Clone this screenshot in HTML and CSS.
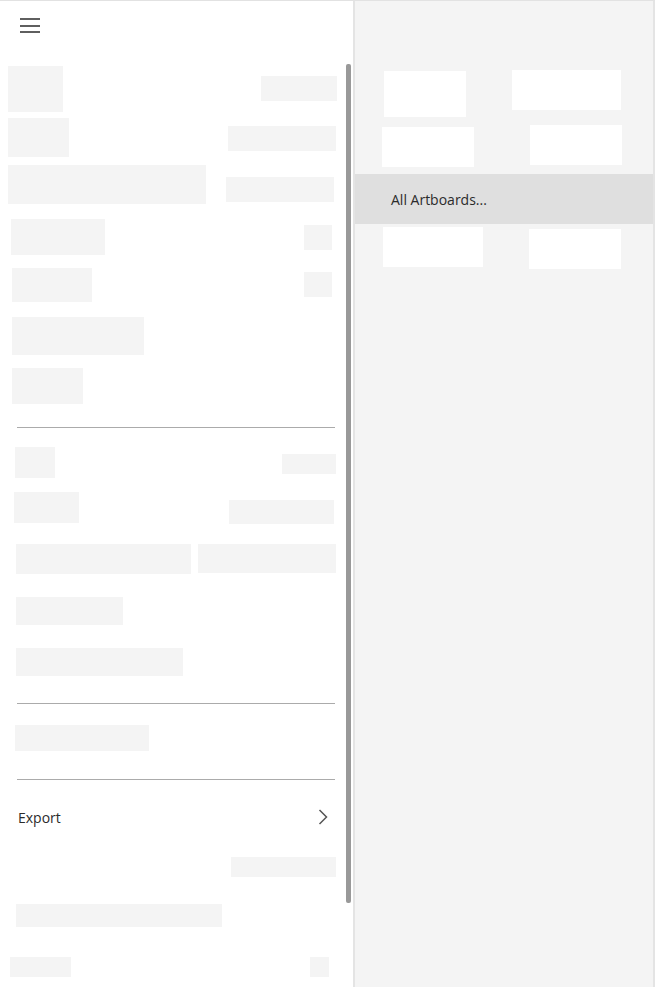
FILE: index.html
```html
<!DOCTYPE html>
<html lang="en">
<head>
  <meta charset="UTF-8">
  <meta name="viewport" content="width=device-width, initial-scale=1.0">
  <title>Menu</title>
  <link rel="stylesheet" href="styles.css">
</head>
<body>
  <div class="app">
    <div class="menu">
      <div class="menu-header">
        <svg class="burger" width="20" height="16" viewBox="0 0 20 16">
          <rect x="0" y="1" width="20" height="2" fill="#5f5f5f"/>
          <rect x="0" y="8" width="20" height="2" fill="#5f5f5f"/>
          <rect x="0" y="14" width="20" height="2" fill="#5f5f5f"/>
        </svg>
      </div>

      <div class="menu-body">
        <div class="row r1"><div class="sk l"></div><div class="sk r"></div></div>
        <div class="row r2"><div class="sk l"></div><div class="sk r"></div></div>
        <div class="row r3"><div class="sk l"></div><div class="sk r"></div></div>
        <div class="row r4"><div class="sk l"></div><div class="sk r"></div></div>
        <div class="row r5"><div class="sk l"></div><div class="sk r"></div></div>
        <div class="row r6"><div class="sk l"></div></div>
        <div class="row r7"><div class="sk l"></div></div>
        <hr class="divider d1">
        <div class="row r8"><div class="sk l"></div><div class="sk r"></div></div>
        <div class="row r9"><div class="sk l"></div><div class="sk r"></div></div>
        <div class="row r10"><div class="sk l"></div><div class="sk r"></div></div>
        <div class="row r11"><div class="sk l"></div></div>
        <div class="row r12"><div class="sk l"></div></div>
        <hr class="divider d2">
        <div class="row r13"><div class="sk l"></div></div>
        <hr class="divider d3">
        <div class="menu-item">
          <span>Export</span>
          <svg class="chevron" width="10" height="16" viewBox="0 0 10 16">
            <path d="M1.5 1 L8.5 8 L1.5 15" fill="none" stroke="#555" stroke-width="1.5"/>
          </svg>
        </div>
        <div class="row r14"><div class="sk r"></div></div>
        <div class="row r15"><div class="sk l"></div></div>
        <div class="row r16"><div class="sk l"></div><div class="sk r"></div></div>
      </div>

      <div class="scrollbar"></div>
    </div>

    <div class="submenu">
      <div class="row ra"><div class="sk l"></div><div class="sk r"></div></div>
      <div class="row rb"><div class="sk l"></div><div class="sk r"></div></div>
      <div class="submenu-item">All Artboards...</div>
      <div class="row rc"><div class="sk l"></div><div class="sk r"></div></div>
    </div>
  </div>
</body>
</html>
```

FILE: styles.css
```css
body {
  margin: 0;
  font-family: 'Open Sans', 'Noto Sans', sans-serif;
  color: #2b2b2b;
  background: #ffffff;
  overflow: hidden;
}

.app {
  display: flex;
  width: 655px;
  height: 987px;
  border-top: 1px solid #e2e2e2;
  box-sizing: border-box;
}

/* left menu */
.menu {
  position: relative;
  width: 353px;
  flex: none;
  background: #fff;
  border-right: 2px solid #e4e4e4;
}

.menu-header {
  height: 65px;
  padding: 16px 0 0 20px;
  box-sizing: border-box;
}

.burger {
  display: block;
}

.row {
  display: flex;
  align-items: flex-start;
}

.sk {
  background: #f4f4f4;
  flex: none;
}

.menu .r {
  margin-left: auto;
}

.r1 { height: 46px; }
.r1 .l { margin-left: 8px; width: 55px; height: 46px; }
.r1 .r { margin: 10px 16px 0 auto; width: 76px; height: 25px; }

.r2 { margin-top: 6px; height: 39px; }
.r2 .l { margin-left: 8px; width: 61px; height: 39px; }
.r2 .r { margin: 8px 17px 0 auto; width: 108px; height: 25px; }

.r3 { margin-top: 8px; height: 39px; }
.r3 .l { margin-left: 8px; width: 198px; height: 39px; }
.r3 .r { margin: 12px 19px 0 auto; width: 108px; height: 25px; }

.r4 { margin-top: 15px; height: 36px; }
.r4 .l { margin-left: 11px; width: 94px; height: 36px; }
.r4 .r { margin: 6px 21px 0 auto; width: 28px; height: 25px; }

.r5 { margin-top: 13px; height: 34px; }
.r5 .l { margin-left: 12px; width: 80px; height: 34px; }
.r5 .r { margin: 4px 21px 0 auto; width: 28px; height: 25px; }

.r6 { margin-top: 15px; height: 38px; }
.r6 .l { margin-left: 12px; width: 132px; height: 38px; }

.r7 { margin-top: 13px; height: 36px; }
.r7 .l { margin-left: 12px; width: 71px; height: 36px; }

.divider {
  border: none;
  border-top: 1px solid #ababab;
  margin: 0 18px 0 17px;
  height: 0;
}

.d1 { margin-top: 23px; }
.d2 { margin-top: 27px; }
.d3 { margin-top: 28px; }

.r8 { margin-top: 19px; height: 31px; }
.r8 .l { margin-left: 15px; width: 40px; height: 31px; }
.r8 .r { margin: 7px 17px 0 auto; width: 54px; height: 20px; }

.r9 { margin-top: 14px; height: 31px; }
.r9 .l { margin-left: 14px; width: 65px; height: 31px; }
.r9 .r { margin: 8px 19px 0 auto; width: 105px; height: 24px; }

.r10 { margin-top: 21px; height: 30px; }
.r10 .l { margin-left: 16px; width: 175px; height: 30px; }
.r10 .r { margin: 0 17px 0 auto; width: 138px; height: 29px; }

.r11 { margin-top: 23px; height: 28px; }
.r11 .l { margin-left: 16px; width: 107px; height: 28px; }

.r12 { margin-top: 23px; height: 28px; }
.r12 .l { margin-left: 16px; width: 167px; height: 28px; }

.r13 { margin-top: 21px; height: 26px; }
.r13 .l { margin-left: 15px; width: 134px; height: 26px; }

.menu-item {
  display: flex;
  align-items: center;
  justify-content: space-between;
  height: 74px;
  padding: 0 25px 0 18px;
  font-size: 14px;
}

.chevron {
  display: block;
}

.r14 { margin-top: 3px; height: 20px; }
.r14 .r { margin-right: 17px; width: 105px; height: 20px; }

.r15 { margin-top: 27px; height: 23px; }
.r15 .l { margin-left: 16px; width: 206px; height: 23px; }

.r16 { margin-top: 30px; height: 20px; }
.r16 .l { margin-left: 10px; width: 61px; height: 20px; }
.r16 .r { margin-right: 24px; width: 19px; height: 20px; }

.scrollbar {
  position: absolute;
  top: 63px;
  left: 346px;
  width: 5px;
  height: 839px;
  background: #999;
  border-radius: 2px;
}

/* right submenu */
.submenu {
  flex: 1;
  background: #f4f4f4;
  border-right: 2px solid #e4e4e4;
}

.submenu .sk {
  background: #fff;
}

.ra { margin-top: 69px; height: 47px; }
.ra .l { margin: 1px 0 0 29px; width: 82px; height: 46px; }
.ra .r { margin-left: 46px; width: 109px; height: 40px; }

.rb { margin-top: 8px; height: 42px; }
.rb .l { margin: 2px 0 0 27px; width: 92px; height: 40px; }
.rb .r { margin-left: 56px; width: 92px; height: 40px; }

.submenu-item {
  margin-top: 7px;
  height: 50px;
  display: flex;
  align-items: center;
  padding-left: 36px;
  background: #dfdfdf;
  font-size: 14px;
}

.rc { margin-top: 3px; height: 42px; }
.rc .l { margin-left: 28px; width: 100px; height: 40px; }
.rc .r { margin: 2px 0 0 46px; width: 92px; height: 40px; }
```
